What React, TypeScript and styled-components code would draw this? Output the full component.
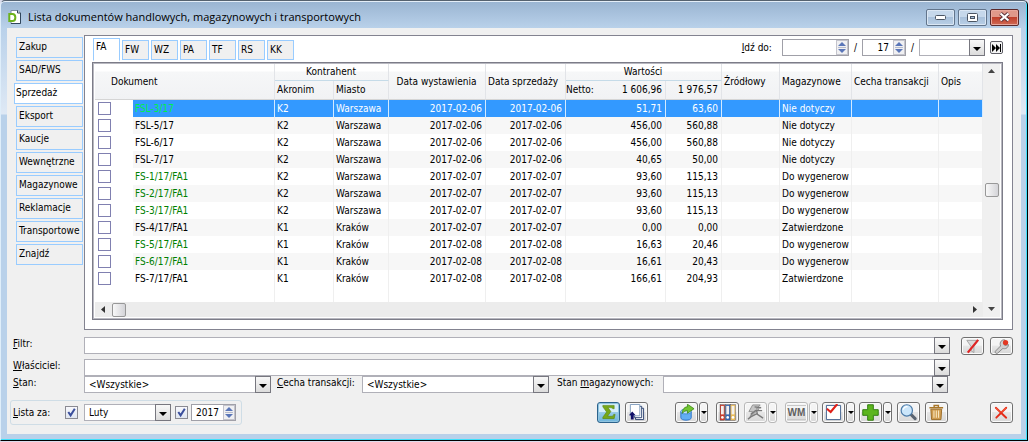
import React from 'react';
import styled, { createGlobalStyle, css } from 'styled-components';

const Global = createGlobalStyle`
  * { box-sizing: border-box; }
  body { margin: 0; background: #dcdcec; }
  body, button, input, select, table {
    font-family: "DejaVu Sans Condensed", "Noto Sans", sans-serif;
    font-size: 10px;
    line-height: 14px;
    color: #000;
  }
`;

const Window = styled.main`
  display: flex;
  flex-direction: column;
  margin: 0 1px 2px 0;
  padding: 0 6px 6px;
  border: 1px solid #000;
  border-top-color: #55626f;
  border-left-color: #dfeefa;
  border-radius: 5px 5px 0 0;
  box-shadow: inset -1px -1px 0 #3fe0fb, inset 0 1px 0 #e4eef8;
  background: linear-gradient(#99b4d1 0, #b9d1ea 27px, #dfe9f5 113px, #b9d1ea 114px);
`;

const TitleBar = styled.header`
  display: flex;
  align-items: center;
  gap: 6px;
  height: 27px;
  padding: 5px 2px 0 1px;
`;

const Title = styled.h1`
  flex: 1;
  margin: 0;
  font: 400 11px/16px "Open Sans", sans-serif;
  white-space: nowrap;
`;

const Caption = styled.button<{ $close?: boolean }>`
  display: grid;
  place-items: center;
  width: 29px;
  height: 17px;
  margin-left: -4px;
  padding: 0;
  border: 1px solid ${p => (p.$close ? '#5b2a2c' : '#62758c')};
  border-radius: 2px;
  box-shadow: inset 0 0 0 1px ${p => (p.$close ? '#e8a79c' : '#dbe7f4')};
  background: ${p => (p.$close
    ? 'linear-gradient(#e0988a 0 45%, #c0402c 50%, #cf6a55)'
    : 'linear-gradient(#c6d8eb 0 45%, #a9c1db 50%, #b9cfe6)')};
`;

const Captions = styled.div`
  display: flex;
  gap: 7px;
`;

const Client = styled.div`
  background: #f0f0f0;
  padding: 7px 8px 9px 4px;
`;

const Upper = styled.div`
  display: flex;
`;

const SideTabs = styled.nav`
  display: flex;
  flex-direction: column;
  gap: 2px;
  width: 73px;
  flex: none;
  padding: 2px 1px 0 5px;
`;

const SideTab = styled.button<{ $active?: boolean }>`
  height: 21px;
  padding: 0 0 2px 2px;
  overflow: hidden;
  border: 1px solid #99ccff;
  background: #f0f0f0;
  text-align: left;
  white-space: nowrap;
  ${p => p.$active && css`
    margin-left: -2px;
    padding-left: 1px;
    background: #fff;
  `}
`;

const Panel = styled.section`
  flex: 1;
  min-width: 0;
  padding: 2px 9px 9px 7px;
  border: 1px solid #838390;
  background: #fff;
`;

const PanelHead = styled.div`
  display: flex;
  justify-content: space-between;
  align-items: flex-start;
  height: 24px;
`;

const TopTabs = styled.div`
  display: flex;
  gap: 2px;
  align-items: flex-start;
  padding-left: 1px;
`;

const TopTab = styled.button<{ $active?: boolean }>`
  width: 27px;
  height: 20px;
  margin-top: 2px;
  padding: 0 0 0 2px;
  border: 1px solid #99ccff;
  background: #f0f0f0;
  text-align: left;
  ${p => p.$active && css`
    height: 23px;
    margin-top: 0;
    padding-bottom: 6px;
    background: #fff;
    border-bottom-color: #fff;
  `}
`;

const GoTo = styled.div`
  display: flex;
  align-items: center;
  gap: 5px;
  padding-top: 1px;
`;

const GoLabel = styled.label`
  margin-right: 5px;
  white-space: nowrap;
`;

const SpinBox = styled.span<{ $w: number }>`
  display: flex;
  width: ${p => p.$w}px;
  height: 17px;
  border: 1px solid #a0a0a8;
  background: #fff;
`;

const SpinInput = styled.input`
  flex: 1;
  min-width: 0;
  padding: 0 4px 0 0;
  border: 0;
  background: transparent;
  text-align: right;
  outline: none;
`;

const SpinArrows = styled.button`
  display: grid;
  place-items: center;
  width: 12px;
  padding: 0;
  border: 1px solid #c4c4cc;
  background: #f0f0f2;
`;

const Combo = styled.span<{ $w?: number }>`
  position: relative;
  display: flex;
  ${p => (p.$w ? `width: ${p.$w}px;` : 'flex: 1; min-width: 0;')}
  height: 17px;
`;

const ComboSelect = styled.select`
  appearance: none;
  width: 100%;
  height: 17px;
  padding: 0 18px 0 4px;
  border: 1px solid #b0b0b8;
  border-radius: 0;
  background: #fff;
  outline: none;
`;

const ComboArrow = styled.span`
  position: absolute;
  top: 0;
  right: 0;
  display: grid;
  place-items: center;
  width: 16px;
  height: 17px;
  padding-top: 2px;
  border: 1px solid #77777f;
  background: linear-gradient(#f8f8f8, #dcdcdc);
  pointer-events: none;
`;

const NextButton = styled.button`
  display: grid;
  place-items: center;
  width: 13px;
  height: 13px;
  padding: 0;
  border: 1px solid #606068;
  border-radius: 2px;
  background: #f4f4f4;
`;

const GridFrame = styled.div`
  display: grid;
  grid-template-columns: minmax(0, 1fr) 17px;
  padding: 1px 2px 2px 2px;
  border: 1px solid #7c7c88;
  box-shadow: inset 1px 1px 0 #b8b8c0, inset -1px -1px 0 #b8b8c0;
  background: #fff;
`;

const Table = styled.table`
  width: 100%;
  table-layout: fixed;
  border-collapse: separate;
  border-spacing: 0;
`;

const Head = styled.thead`
  background: linear-gradient(#fff 0 7px, #f6f7f8 8px, #f1f2f4 35px);
`;

const Th = styled.th<{ $group?: boolean; $align?: string; $pad?: number }>`
  height: ${p => (p.$group ? 17 : 19)}px;
  padding: 0 3px 0 ${p => p.$pad ?? 2}px;
  border-right: 1px solid #e2e4e8;
  border-bottom: 1px solid ${p => (p.$group ? '#c5dbe8' : '#d5d5d5')};
  font-weight: 400;
  text-align: ${p => p.$align ?? 'left'};
  white-space: nowrap;
`;

const Totals = styled.span`
  display: flex;
  justify-content: space-between;
`;

const Row = styled.tr<{ $selected?: boolean; $alt?: boolean }>`
  ${p => p.$alt && css`td + td { background: #f7f7f7; }`}
  ${p => p.$selected && css`
    color: #fff;
    td + td { background: #3399ff; border-right-color: #d4eaff; }
  `}
`;

const Td = styled.td<{ $num?: boolean; $color?: string; $check?: boolean }>`
  height: 17px;
  padding: ${p => (p.$check ? '0 0 0 3px' : '0 3px 0 2px')};
  border-right: 1px solid ${p => (p.$check ? 'transparent' : '#efefef')};
  color: ${p => p.$color ?? 'inherit'};
  text-align: ${p => (p.$num ? 'right' : 'left')};
  line-height: 15px;
  white-space: nowrap;
`;

const Filler = styled.td`
  height: 15px;
  padding: 0;
  border-right: 1px solid #efefef;
  &:first-child { border-right-color: transparent; }
`;

const RowCheck = styled.input`
  appearance: none;
  display: block;
  width: 13px;
  height: 13px;
  margin: 0;
  border: 1px solid #8080b0;
  background: #fff;
`;

const VScroll = styled.div`
  display: flex;
  flex-direction: column;
  align-items: center;
  justify-content: space-between;
  grid-row: span 2;
  padding: 5px 1px 6px 1px;
  background: #f0f0f0;
`;

const HScroll = styled.div`
  display: flex;
  align-items: center;
  justify-content: space-between;
  height: 15px;
  padding: 0 6px;
  background: #ececec;
`;

const Thumb = styled.span`
  width: 14px;
  height: 14px;
  border: 1px solid #989898;
  border-radius: 2px;
  background: linear-gradient(90deg, #f8f8f8, #d4d4d8);
`;

const ScrollStart = styled.span`
  display: flex;
  align-items: center;
  gap: 7px;
`;

const Form = styled.form`
  display: flex;
  flex-direction: column;
  padding: 7px 0 0 2px;
`;

const Line = styled.div<{ $gap?: number }>`
  display: flex;
  align-items: flex-start;
  padding-bottom: ${p => p.$gap ?? 0}px;
`;

const Field = styled.label<{ $w: number; $pad?: number }>`
  width: ${p => p.$w}px;
  flex: none;
  padding-left: ${p => p.$pad ?? 0}px;
  white-space: nowrap;
`;

const Side = styled.div<{ $w: number }>`
  display: flex;
  justify-content: flex-end;
  gap: 6px;
  width: ${p => p.$w}px;
  height: 17px;
  flex: none;
`;

const Bar = styled.div`
  display: flex;
  align-items: center;
  padding-top: 7px;
  margin-left: -3px;
`;

const Period = styled.fieldset`
  display: flex;
  align-items: center;
  width: 232px;
  height: 25px;
  margin: 0;
  padding: 0 5px 0 2px;
  border: 1px solid #cfdde6;
  border-radius: 3px;
`;

const TickBox = styled.span<{ $before?: number; $after: number }>`
  position: relative;
  display: flex;
  flex: none;
  margin: 0 ${p => p.$after}px 0 ${p => p.$before ?? 0}px;
  svg { position: absolute; top: 1px; left: 1px; pointer-events: none; }
`;

const Tick = styled.input`
  appearance: none;
  width: 13px;
  height: 13px;
  margin: 0;
  border: 1px solid #8a8a92;
  background: linear-gradient(#f8f8fc, #dfe5f0);
`;

const Tools = styled.div`
  display: flex;
  justify-content: flex-end;
  flex: 1;
`;

const Tool = styled.button<{ $on?: boolean; $dim?: boolean; $h?: number }>`
  display: grid;
  place-items: center;
  width: 23px;
  height: ${p => p.$h ?? 21}px;
  padding: 0;
  border: 1px solid ${p => (p.$on ? '#2c628b' : p.$dim ? '#b8b8b8' : '#707070')};
  border-radius: 3px;
  box-shadow: inset 0 0 0 1px ${p => (p.$on ? '#8fc4e0' : '#fbfbfb')};
  background: ${p => (p.$on
    ? 'linear-gradient(#d5eefa 0 45%, #98cbe8 50%, #6db4dc)'
    : 'linear-gradient(#f4f4f4 0 45%, #e6e6e6 50%, #d8d8d8)')};
`;

const Drop = styled(Tool)`
  width: 9px;
  margin-left: 1px;
`;

const Group = styled.span<{ $after: number }>`
  display: flex;
  margin-right: ${p => p.$after}px;
`;

const Down = ({ size = 8 }: { size?: number }) => (
  <svg width={size} height={size / 2} viewBox="0 0 8 4"><path d="M0 0H8L4 4Z" fill="#000" /></svg>
);

const UpDown = () => (
  <svg width="8" height="11" viewBox="0 0 8 11">
    <path d="M0 4L4 0L8 4ZM0 7L4 11L8 7Z" fill="#5a76b8" />
    <path d="M0 5.5H8" stroke="#b8bccb" />
  </svg>
);

const CheckMark = () => (
  <svg width="11" height="11" viewBox="0 0 11 11">
    <path d="M2.3 5L4.6 8.4L8.8 1.8" fill="none" stroke="#3b4f9c" strokeWidth="2" />
  </svg>
);

const Logo = () => (
  <svg width="14" height="14" viewBox="0 0 14 14">
    <path d="M3 .5H10L12.5 3V13.5H3Z" fill="#fff" stroke="#7c8ea2" />
    <path d="M12.5 3V13.5H3M9.5 .5V3H12.5" fill="none" stroke="#30465c" />
    <path d="M1.3 4H4.5C8.3 4 8.3 11 4.5 11H1.3Z" fill="#fff" stroke="#6cb21c" strokeWidth="2" />
  </svg>
);

const binders: [string, number][] = [['#d33a28', 0.8], ['#3266b4', 6.4], ['#e8bb58', 12]];

const icons: Record<string, React.ReactNode> = {
  sum: <path d="M3 1.5H15V5H13.5C13 4 12 3.8 8.5 3.8L11.5 8L8 13H12C13.5 13 14 12.5 14.5 11H16L15 15.5H3V14L7 8.5L3 3Z" fill="#76a818" stroke="#568010" strokeWidth=".6" />,
  pages: (
    <>
      <path d="M8.5 5V1.5M12 4.5H16.5V16.5H8V14" fill="#fff" stroke="#28406e" />
      <path d="M11 2.5H14.5V14.5H7V12" fill="#fff" stroke="#28406e" />
      <path d="M2.5 .5H12.5V12.5H2.5Z" fill="#fff" stroke="#7f9cbc" />
      <path d="M4.500 8L8 12H6V16.5H3V12H1Z" fill="#10106a" />
    </>
  ),
  export: (
    <>
      <path d="M3 8V14.5C3 18 14 18 14 14.5V8Z" fill="#62aef2" stroke="#2b72c8" />
      <ellipse cx="8.5" cy="8" rx="5.5" ry="2.5" fill="#c3e1fb" stroke="#4088d4" />
      <path d="M4.5 10C4.5 5 7.500 3 10 3V.2L17 5L10 9.800V7C8 7 6 8 4.5 10Z" fill="#72c632" stroke="#35800e" strokeWidth=".8" />
    </>
  ),
  binders: (
    <>
      {binders.map(([c, x]) => (
        <g key={c} transform={`translate(${x} .5)`}>
          <rect x=".3" y=".3" width="5" height="16.4" fill={c} stroke="#5b5050" strokeWidth=".5" />
          <rect x="1.3" y="1.5" width="3" height="9" fill="#f4f1ee" />
          <circle cx="2.8" cy="13.7" r="1.4" fill="#fff" />
        </g>
      ))}
    </>
  ),
  bolt: (
    <>
      <path d="M6 1H14L10 5H13L3 14L6 8H2Z" fill="#c6c6c6" stroke="#909090" />
      <path d="M4 11L9 7L16 7M10 6L11 11L17 15M11 10L5 13L1 16M8 3L15 4" fill="none" stroke="#7a7a7a" strokeWidth="1.5" />
    </>
  ),
  check: (
    <>
      <path d="M1.5 1.5H16.5V16.5H1.5Z" fill="#fff" stroke="#3f5f8c" />
      <path d="M2 5L6 8.5L13 0" fill="none" stroke="#e02018" strokeWidth="2.2" />
    </>
  ),
  plus: <path d="M6 .8H12V6H17.2V12H12V17.2H6V12H.8V6H6Z" fill="#5cb51e" stroke="#2e7a0c" />,
  search: (
    <>
      <path d="M11 10.500L16 15.500" stroke="#5b6470" strokeWidth="3.2" strokeLinecap="round" />
      <circle cx="7.2" cy="6.8" r="6" fill="#cbe6fa" stroke="#4c7ba8" strokeWidth="1.3" />
      <path d="M3.500 6C4 3.500 6 2.500 8 3" fill="none" stroke="#fff" strokeWidth="1.3" />
    </>
  ),
  trash: (
    <>
      <path d="M3 5.5H14.5L13.7 16.5H3.8Z" fill="#cf9c50" stroke="#9a6a24" />
      <path d="M1.5 4H16M6.5 3.5V1.5H11V3.5" fill="none" stroke="#a87628" strokeWidth="1.5" />
      <path d="M6.3 7V14.5M8.8 7V14.5M11.2 7V14.5" stroke="#fbe9c2" strokeWidth="1.1" />
    </>
  ),
  close: (
    <>
      <path d="M3 4L14 14.5M14 4L3.5 14.5" stroke="#e42a18" strokeWidth="2" strokeLinecap="round" />
      <path d="M3 4L8 8.5M14 4L9 8.5" stroke="#ff6038" strokeWidth="1" />
    </>
  ),
  noFilter: (
    <>
      <path d="M3 2.500H15L10.500 9V15.500L7.500 13.500V9Z" fill="#dadada" stroke="#a4a4a4" />
      <path d="M15 2L4 15.500" stroke="#e02424" strokeWidth="2.4" />
    </>
  ),
  wrench: (
    <>
      <path d="M2.500 14L8 8.500C6.500 4 9.500 1.500 12.500 2L11 5.500L12.500 8L16.500 7C16 11 12.500 12 10.500 11L5 16C3.500 17 1.500 15.500 2.500 14Z" fill="#d0d0d0" stroke="#858585" />
      <circle cx="13.3" cy="4.800" r="2.800" fill="#e23822" />
    </>
  ),
};

const Icon = ({ name }: { name: string }) => (
  <svg width="17" height="17" viewBox="0 0 18 18">{icons[name]}</svg>
);

const Initials = styled.span`
  width: 19px;
  border: 1px solid #c8c8c8;
  border-width: 1px 0;
  color: #606060;
  font: 700 10px/13px "Liberation Sans", sans-serif;
`;

const SplitDrop = ({ label, dim }: { label: string; dim?: boolean }) => (
  <Drop type="button" aria-label={label} $dim={dim}><Down size={6} /></Drop>
);

const Dropdown = ({ id, w, value, label }: { id: string; w?: number; value?: string; label?: string }) => (
  <Combo $w={w}>
    <ComboSelect id={id} aria-label={label}><option>{value ?? ''}</option></ComboSelect>
    <ComboArrow><Down /></ComboArrow>
  </Combo>
);

const Spinner = ({ id, w, value, label }: { id: string; w: number; value?: string; label?: string }) => (
  <SpinBox $w={w}>
    <SpinInput id={id} aria-label={label} defaultValue={value} />
    <SpinArrows type="button" aria-label="Zmień"><UpDown /></SpinArrows>
  </SpinBox>
);

const sideTabs = ['Zakup', 'SAD/FWS', 'Sprzedaż', 'Eksport', 'Kaucje', 'Wewnętrzne', 'Magazynowe', 'Reklamacje', 'Transportowe', 'Znajdź'];
const topTabs = ['FA', 'FW', 'WZ', 'PA', 'TF', 'RS', 'KK'];
const columns = [38, 142, 59, 55, 97, 80, 100, 56, 58, 72, 87];

const green = '#008000';
const documents: [string, string, string, string, string, string, string, string?][] = [
  ['FSL-3/17', 'K2', 'Warszawa', '2017-02-06', '51,71', '63,60', 'Nie dotyczy', '#00f04a'],
  ['FSL-5/17', 'K2', 'Warszawa', '2017-02-06', '456,00', '560,88', 'Nie dotyczy'],
  ['FSL-6/17', 'K2', 'Warszawa', '2017-02-06', '456,00', '560,88', 'Nie dotyczy'],
  ['FSL-7/17', 'K2', 'Warszawa', '2017-02-06', '40,65', '50,00', 'Nie dotyczy'],
  ['FS-1/17/FA1', 'K2', 'Warszawa', '2017-02-07', '93,60', '115,13', 'Do wygenerow', green],
  ['FS-2/17/FA1', 'K2', 'Warszawa', '2017-02-07', '93,60', '115,13', 'Do wygenerow', green],
  ['FS-3/17/FA1', 'K2', 'Warszawa', '2017-02-07', '93,60', '115,13', 'Do wygenerow', green],
  ['FS-4/17/FA1', 'K1', 'Kraków', '2017-02-07', '0,00', '0,00', 'Zatwierdzone'],
  ['FS-5/17/FA1', 'K1', 'Kraków', '2017-02-08', '16,63', '20,46', 'Do wygenerow', green],
  ['FS-6/17/FA1', 'K1', 'Kraków', '2017-02-08', '16,61', '20,43', 'Do wygenerow', green],
  ['FS-7/17/FA1', 'K1', 'Kraków', '2017-02-08', '166,61', '204,93', 'Zatwierdzone'],
];

const DocumentTable = () => (
  <Table>
    <colgroup>
      {columns.map((w, i) => <col key={i} width={w} />)}
      <col />
    </colgroup>
    <Head>
      <tr>
        <Th rowSpan={2} colSpan={2} $pad={16}>Dokument</Th>
        <Th colSpan={2} $group $align="center">Kontrahent</Th>
        <Th rowSpan={2} $align="center">Data wystawienia</Th>
        <Th rowSpan={2}>Data sprzedaży</Th>
        <Th colSpan={2} $group $align="center">Wartości</Th>
        <Th rowSpan={2}>Źródłowy</Th>
        <Th rowSpan={2}>Magazynowe</Th>
        <Th rowSpan={2}>Cecha transakcji</Th>
        <Th rowSpan={2}>Opis</Th>
      </tr>
      <tr>
        <Th>Akronim</Th>
        <Th>Miasto</Th>
        <Th $pad={0}><Totals><span>Netto:</span><span>1 606,96</span></Totals></Th>
        <Th $align="right">1 976,57</Th>
      </tr>
    </Head>
    <tbody>
      {documents.map(([name, code, city, date, net, gross, stock, color], i) => (
        <Row key={name} $selected={i === 0} $alt={i % 2 === 1}>
          <Td $check><RowCheck type="checkbox" aria-label={name} /></Td>
          <Td $color={color}>{name}</Td>
          <Td>{code}</Td>
          <Td>{city}</Td>
          <Td $num>{date}</Td>
          <Td $num>{date}</Td>
          <Td $num>{net}</Td>
          <Td $num>{gross}</Td>
          <Td />
          <Td>{stock}</Td>
          <Td />
          <Td />
        </Row>
      ))}
      <tr>{[...columns, 0].map((_, i) => <Filler key={i} />)}</tr>
    </tbody>
  </Table>
);

export default function App() {
  return (
    <>
      <Global />
      <Window>
        <TitleBar>
          <Logo />
          <Title>Lista dokumentów handlowych, magazynowych i transportowych</Title>
          <Captions>
            <Caption aria-label="Minimalizuj">
              <svg width="11" height="5"><rect x=".5" y=".5" width="10" height="4" rx="1" fill="#fff" stroke="#4b5563" /></svg>
            </Caption>
            <Caption aria-label="Maksymalizuj">
              <svg width="11" height="9"><rect x=".5" y=".5" width="10" height="8" rx="1" fill="#fff" stroke="#4b5563" /><rect x="3.5" y="3.5" width="4" height="2" fill="#a9c1db" stroke="#4b5563" /></svg>
            </Caption>
            <Caption aria-label="Zamknij" $close>
              <svg width="13" height="10" viewBox="0 0 13 10">
                <path d="M2.5 1.5L10.5 8.5M10.5 1.5L2.5 8.5" stroke="#5a3038" strokeWidth="4" />
                <path d="M2.5 1.5L10.5 8.5M10.5 1.5L2.5 8.5" stroke="#fff" strokeWidth="2.2" />
              </svg>
            </Caption>
          </Captions>
        </TitleBar>
        <Client>
          <Upper>
            <SideTabs>
              {sideTabs.map(t => <SideTab key={t} $active={t === 'Sprzedaż'}>{t}</SideTab>)}
            </SideTabs>
            <Panel>
              <PanelHead>
                <TopTabs>
                  {topTabs.map(t => <TopTab key={t} $active={t === 'FA'}>{t}</TopTab>)}
                </TopTabs>
                <GoTo>
                  <GoLabel htmlFor="number"><u>I</u>dź do:</GoLabel>
                  <Spinner id="number" w={67} />
                  <span>/</span>
                  <Spinner id="year-short" w={44} value="17" label="Rok" />
                  <span>/</span>
                  <Dropdown id="series" w={66} label="Seria" />
                  <NextButton aria-label="Dalej">
                    <svg width="9" height="8"><path d="M0 0L4 4L0 8ZM4 0L8 4L4 8ZM8 0H9V8H8Z" fill="#000" /></svg>
                  </NextButton>
                </GoTo>
              </PanelHead>
              <GridFrame>
                <DocumentTable />
                <VScroll>
                  <svg width="7" height="4"><path d="M0 4L3.5 0L7 4Z" fill="#444" /></svg>
                  <Thumb />
                  <svg width="7" height="4"><path d="M0 0L3.5 4L7 0Z" fill="#444" /></svg>
                </VScroll>
                <HScroll>
                  <ScrollStart>
                    <svg width="4" height="7"><path d="M4 0L0 3.5L4 7Z" fill="#333" /></svg>
                    <Thumb />
                  </ScrollStart>
                  <svg width="4" height="7"><path d="M0 0L4 3.5L0 7Z" fill="#333" /></svg>
                </HScroll>
              </GridFrame>
            </Panel>
          </Upper>
          <Form>
            <Line $gap={5}>
              <Field htmlFor="filter" $w={71}><u>F</u>iltr:</Field>
              <Dropdown id="filter" />
              <Side $w={63}>
                <Tool type="button" aria-label="Wyczyść filtr" $h={18}><Icon name="noFilter" /></Tool>
                <Tool type="button" aria-label="Konstruktor filtra" $h={18}><Icon name="wrench" /></Tool>
              </Side>
            </Line>
            <Line>
              <Field htmlFor="owner" $w={71}><u>W</u>łaściciel:</Field>
              <Dropdown id="owner" />
              <Side $w={63} />
            </Line>
            <Line>
              <Field htmlFor="state" $w={71}><u>S</u>tan:</Field>
              <Dropdown id="state" w={187} value="<Wszystkie>" />
              <Field htmlFor="feature" $w={91} $pad={6}><u>C</u>echa transakcji:</Field>
              <Dropdown id="feature" w={187} value="<Wszystkie>" />
              <Field htmlFor="stock" $w={114} $pad={8}>Stan <u>m</u>agazynowych:</Field>
              <Dropdown id="stock" />
              <Side $w={65} />
            </Line>
            <Bar>
              <Period>
                <Field htmlFor="by-month" $w={52}><u>L</u>ista za:</Field>
                <TickBox $after={6}><Tick id="by-month" type="checkbox" defaultChecked /><CheckMark /></TickBox>
                <Dropdown id="month" value="Luty" label="Miesiąc" />
                <TickBox $before={4} $after={3}><Tick type="checkbox" defaultChecked aria-label="Ogranicz do roku" /><CheckMark /></TickBox>
                <Spinner id="year" w={45} value="2017" label="Rok listy" />
              </Period>
              <Tools>
                <Group $after={5}><Tool type="button" aria-label="Suma" $on><Icon name="sum" /></Tool></Group>
                <Group $after={27}><Tool type="button" aria-label="Kopiuj"><Icon name="pages" /></Tool></Group>
                <Group $after={8}><Tool type="button" aria-label="Eksport"><Icon name="export" /></Tool><SplitDrop label="Opcje eksportu" /></Group>
                <Group $after={5}><Tool type="button" aria-label="Księguj"><Icon name="binders" /></Tool></Group>
                <Group $after={8}><Tool type="button" aria-label="Generuj" $dim><Icon name="bolt" /></Tool><SplitDrop label="Opcje generowania" dim /></Group>
                <Group $after={4}><Tool type="button" aria-label="Magazyn WM" $dim><Initials>WM</Initials></Tool><SplitDrop label="Opcje WM" dim /></Group>
                <Group $after={4}><Tool type="button" aria-label="Zatwierdź"><Icon name="check" /></Tool><SplitDrop label="Opcje zatwierdzania" /></Group>
                <Group $after={5}><Tool type="button" aria-label="Dodaj"><Icon name="plus" /></Tool><SplitDrop label="Opcje dodawania" /></Group>
                <Group $after={5}><Tool type="button" aria-label="Podgląd"><Icon name="search" /></Tool></Group>
                <Group $after={42}><Tool type="button" aria-label="Usuń"><Icon name="trash" /></Tool></Group>
                <Tool type="button" aria-label="Zamknij listę"><Icon name="close" /></Tool>
              </Tools>
            </Bar>
          </Form>
        </Client>
      </Window>
    </>
  );
}
